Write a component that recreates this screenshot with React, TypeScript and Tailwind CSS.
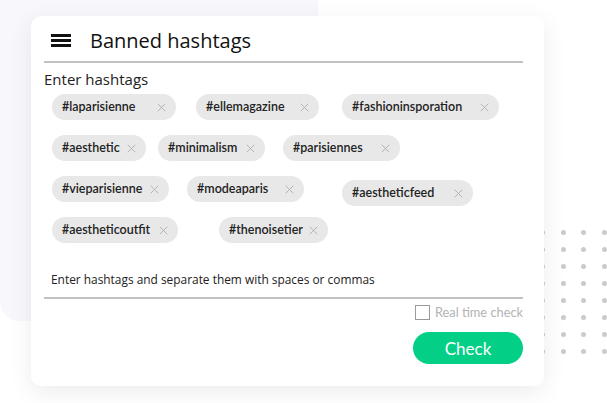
import React from "react";

type Chip = { t: string; w: number; ml: number; mt?: number };

const rows: Chip[][] = [
  [
    { t: "#laparisienne", w: 124, ml: 8 },
    { t: "#ellemagazine", w: 123, ml: 20 },
    { t: "#fashioninsporation", w: 157, ml: 23 },
  ],
  [
    { t: "#aesthetic", w: 94, ml: 8 },
    { t: "#minimalism", w: 107, ml: 12 },
    { t: "#parisiennes", w: 117, ml: 18 },
  ],
  [
    { t: "#vieparisienne", w: 117, ml: 8 },
    { t: "#modeaparis", w: 117, ml: 18 },
    { t: "#aestheticfeed", w: 131, ml: 38, mt: 4 },
  ],
  [
    { t: "#aestheticoutfit", w: 126, ml: 8 },
    { t: "#thenoisetier", w: 109, ml: 41 },
  ],
];

const OPEN = { fontFamily: "'Open Sans', Lato, sans-serif" };

function XIcon() {
  return (
    <svg width="9" height="9" viewBox="0 0 9 9" className="shrink-0">
      <path d="M1 1L8 8M8 1L1 8" stroke="#b4b4b4" strokeWidth="1" strokeLinecap="round" />
    </svg>
  );
}

function ChipView({ c }: { c: Chip }) {
  return (
    <div
      className="h-[26px] rounded-full bg-[#e8e8e8] flex items-center justify-between pl-[10px] pr-[10px] shrink-0"
      style={{ width: c.w, marginLeft: c.ml, marginTop: c.mt ?? 0 }}
    >
      <span className="text-[12.5px] font-semibold text-[#222] leading-none whitespace-nowrap">{c.t}</span>
      <XIcon />
    </div>
  );
}

export default function App() {
  const dotRows = Array.from({ length: 8 });
  const dotCols = Array.from({ length: 4 });
  return (
    <div
      className="relative w-[607px] h-[403px] overflow-hidden bg-white"
      style={{ fontFamily: "Lato, 'Open Sans', sans-serif" }}
    >
      {/* decorative background blob */}
      <div className="absolute left-0 top-[-20px] w-[318px] h-[341px] rounded-[20px] bg-[#f7f7fc]" />
      {/* decorative dots */}
      <div className="absolute left-[540px] top-[230px] flex flex-col gap-[12px]">
        {dotRows.map((_, r) => (
          <div key={r} className="flex gap-[15.5px]">
            {dotCols.map((_, c) => (
              <div key={c} className="w-[5px] h-[5px] rounded-full bg-[#cbcbcb]" />
            ))}
          </div>
        ))}
      </div>

      <div className="relative pl-[31px] pt-[16px]">
        <div className="w-[513px] h-[370px] bg-white rounded-[10px] shadow-[0_6px_24px_rgba(0,0,0,0.08)] pl-[13px] pr-[21px] pt-[6px] flex flex-col">
          {/* header */}
          <div className="h-[39px] flex items-center pl-[7px] border-b-2 border-[#c2c2c2] box-content">
            <div className="flex flex-col gap-[2px] w-[20px] -mt-[2px]">
              <div className="h-[3px] bg-[#111]" />
              <div className="h-[3px] bg-[#111]" />
              <div className="h-[3px] bg-[#111]" />
            </div>
            <div className="ml-[19px] -mt-[2px] text-[20px] font-medium text-[#111] leading-none" style={OPEN}>
              Banned hashtags
            </div>
          </div>

          <div className="mt-[6px] h-[20px] flex items-center text-[15px] font-medium text-[#222]" style={OPEN}>
            Enter hashtags
          </div>

          <div className="mt-[5px] flex flex-col gap-[15px]">
            {rows.map((row, i) => (
              <div key={i} className="flex items-start h-[26px]">
                {row.map((c) => (
                  <ChipView key={c.t} c={c} />
                ))}
              </div>
            ))}
          </div>

          <div className="mt-[27px] h-[20px] pl-[7px] flex items-center text-[11.9px] text-[#222]" style={OPEN}>
            Enter hashtags and separate them with spaces or commas
          </div>
          <div className="mt-[7px] h-[2px] bg-[#c2c2c2]" />

          <div className="mt-[6px] flex items-center justify-end gap-[5px]">
            <div className="w-[15px] h-[15px] border border-[#9a9a9a] bg-white" />
            <span className="text-[12.8px] text-[#b3b3b3] leading-none">Real time check</span>
          </div>

          <div className="mt-[12px] flex justify-end">
            <button className="w-[110px] h-[32px] rounded-full bg-[#03d086] text-white text-[17px] leading-none">
              Check
            </button>
          </div>
        </div>
      </div>
    </div>
  );
}
